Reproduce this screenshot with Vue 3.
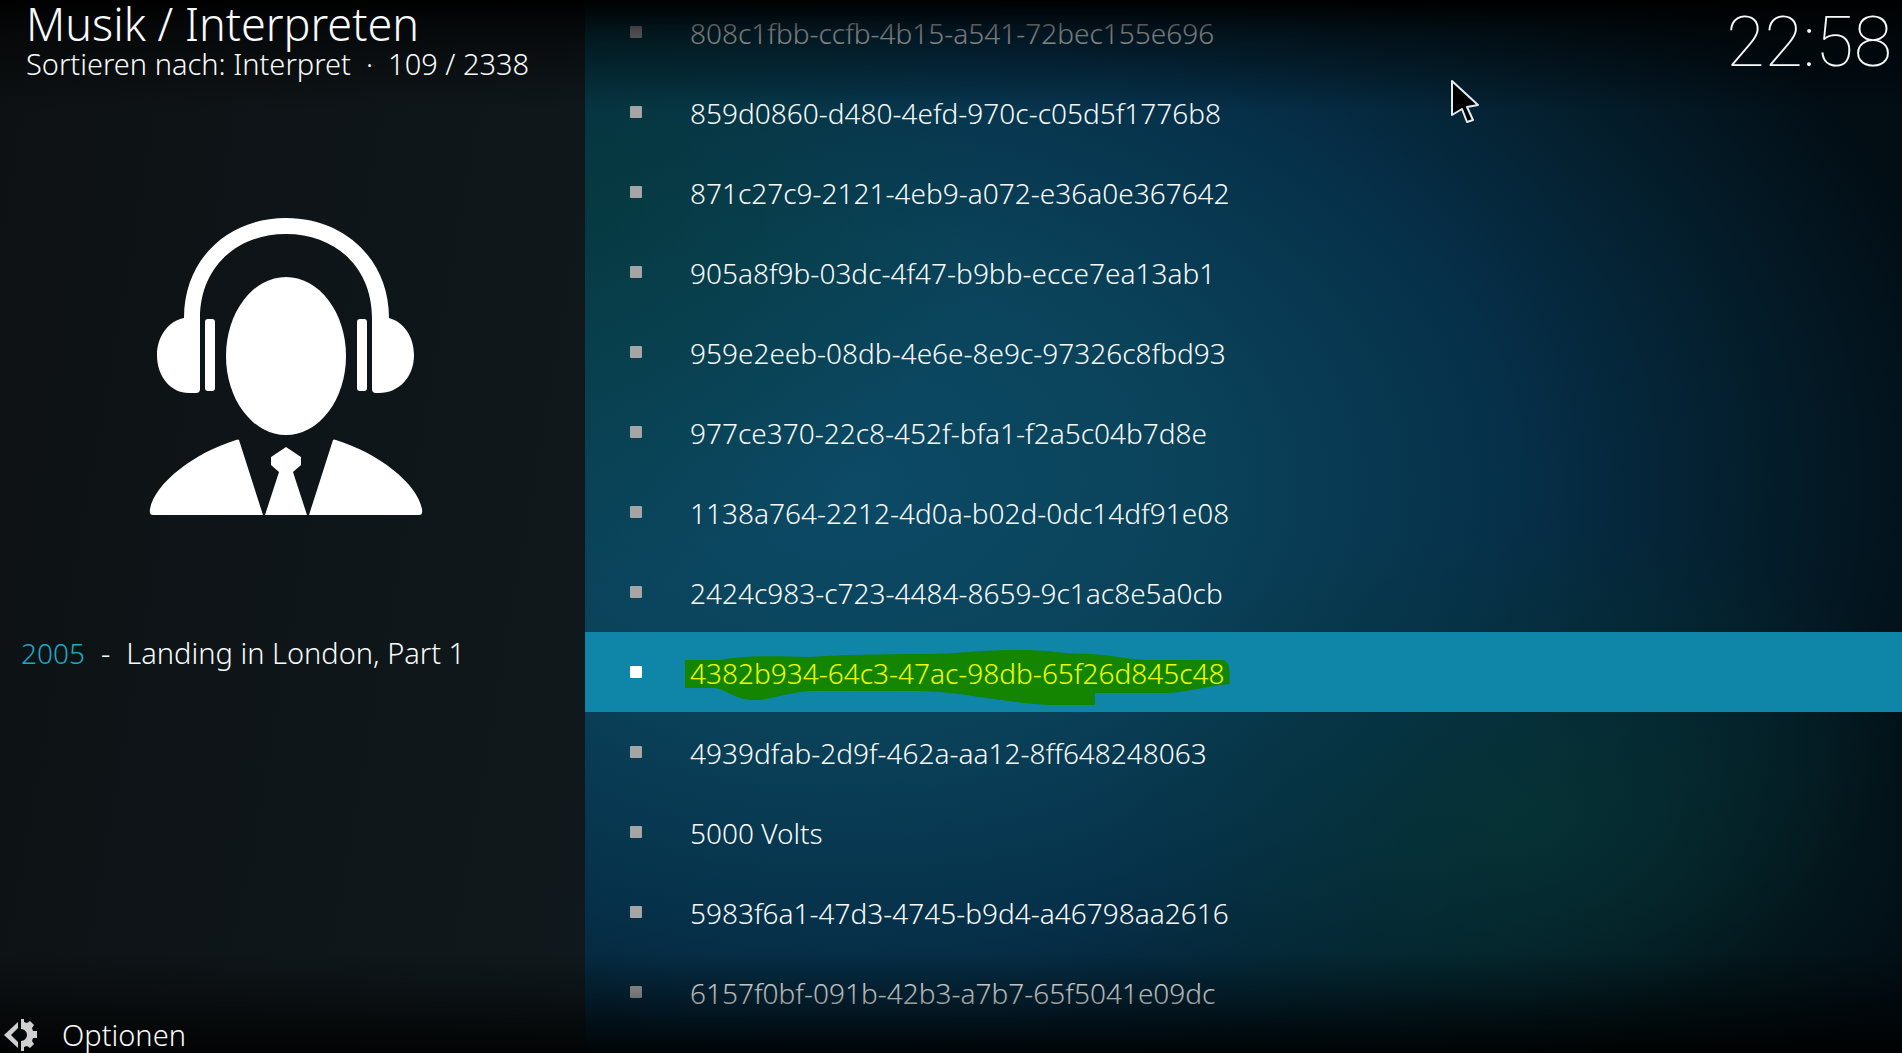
<template>
  <div class="screen">
    <aside class="panel">
      <header class="heading">
        <h1>Musik / Interpreten</h1>
        <p>Sortieren nach: Interpret &nbsp;·&nbsp; 109 / 2338</p>
      </header>

      <!-- artist placeholder -->
      <svg class="artist" viewBox="0 0 310 330" fill="#fff">
        <path d="M54 118C54 59 98 18 156 18S259 59 259 118C274 122 284 137 284 155C284 177 269 193 249 193H246Q242 193 242 189V118C242 68 206 34 156 34S70 68 70 118V189Q70 193 66 193H59C41 193 27 177 27 155C27 137 38 121 54 118Z" />
        <rect x="75" y="119" width="10" height="72" rx="3" />
        <rect x="227" y="119" width="10" height="72" rx="3" />
        <ellipse cx="156" cy="156" rx="60" ry="79" />
        <path d="M109 240L133 315H23Q19 315 20 309C25 283 64 253 106 240Q108 239 109 240Z" />
        <path d="M203 240L179 315H289Q293 315 292 309C287 283 248 253 206 240Q204 239 203 240Z" />
        <path d="M156 247L171 257V265L163 272L177 315H135L149 272L141 265V257Z" />
      </svg>

      <div class="discography">
        <span class="year">2005</span>
        <span>-</span>
        <span>Landing in London, Part 1</span>
      </div>
    </aside>

    <main class="content">
      <ul class="artists">
        <li
          v-for="(artist, index) in artists"
          :key="artist"
          :class="{ active: index === current }"
          @click="current = index"
        >
          <i class="bullet"></i>
          <span class="name">
            <svg v-if="artist === marked" class="marker" viewBox="0 0 546 56" preserveAspectRatio="none">
              <path d="M0 10H35C60 5 90 6 125 7C170 4 230 4 245 4C285 3 310 -1 345 0C370 1 382 4 405 4C430 5 445 10 465 10H540Q546 12 546 24V34C520 36 500 44 475 43H411V55H365C320 53 270 40 230 41H125C100 43 85 50 70 50C50 50 43 40 30 38H0Z" fill="#138500" />
            </svg>
            <span class="label" :class="{ marked: artist === marked }">{{ artist }}</span>
          </span>
        </li>
      </ul>
    </main>

    <div class="shade"></div>

    <button class="options" type="button">
      <svg class="gear" viewBox="0 0 34 34" fill="#d0d0d0">
        <path d="M14 4V10L7 17L14 24V30L0 17Z" />
        <path d="M17 1H20V4L23 5L26 3L30 7L28 10L29 13H33V20H29L28 23L30 26L26 30L23 28L20 29V33H17V23A6 6 0 0 0 17 11Z" />
      </svg>
      <span>Optionen</span>
    </button>

    <time class="clock">22:58</time>

    <svg class="cursor" viewBox="0 0 30 46">
      <path d="M2 2V36L12 30L17 43L23 41L17 28L28 26Z" fill="#000" stroke="#e4eef0" stroke-width="2" stroke-linejoin="round" />
    </svg>
  </div>
</template>

<script setup>
import { ref } from 'vue'

const artists = [
  '808c1fbb-ccfb-4b15-a541-72bec155e696',
  '859d0860-d480-4efd-970c-c05d5f1776b8',
  '871c27c9-2121-4eb9-a072-e36a0e367642',
  '905a8f9b-03dc-4f47-b9bb-ecce7ea13ab1',
  '959e2eeb-08db-4e6e-8e9c-97326c8fbd93',
  '977ce370-22c8-452f-bfa1-f2a5c04b7d8e',
  '1138a764-2212-4d0a-b02d-0dc14df91e08',
  '2424c983-c723-4484-8659-9c1ac8e5a0cb',
  '4382b934-64c3-47ac-98db-65f26d845c48',
  '4939dfab-2d9f-462a-aa12-8ff648248063',
  '5000 Volts',
  '5983f6a1-47d3-4745-b9d4-a46798aa2616',
  '6157f0bf-091b-42b3-a7b7-65f5041e09dc'
]

const current = ref(8)
const marked = '4382b934-64c3-47ac-98db-65f26d845c48'
</script>

<style>
body {
  margin: 0;
  background: #000;
}
</style>

<style scoped>
.screen {
  position: relative;
  display: flex;
  height: 100vh;
  overflow: hidden;
  color: #f8fbfb;
  font-family: "Noto Sans", sans-serif;
  font-size: 29px;
  font-weight: 300;
  line-height: 40px;
}
.panel {
  display: flex;
  flex-direction: column;
  flex: 0 0 585px;
  box-sizing: border-box;
  background: linear-gradient(100deg, #0d1113, #10191d);
}
.heading {
  position: relative;
  z-index: 2;
  padding: 0 26px;
}
h1,
p {
  margin: 0;
  font-weight: 300;
}
h1 {
  font-size: 45px;
  line-height: 48px;
}
p {
  line-height: 32px;
}
.artist {
  width: 310px;
  height: 330px;
  margin: 120px 0 0 130px;
}
.discography {
  display: flex;
  align-items: baseline;
  gap: 16px;
  margin-top: 103px;
  padding: 0 21px;
}
.year {
  color: #1fa8c4;
  font-size: 28px;
}
.content {
  flex: 1;
  min-width: 0;
  background:
    radial-gradient(ellipse 30% 38% at 0% 18%, rgba(4, 56, 52, 0.6), rgba(4, 56, 52, 0)),
    radial-gradient(ellipse 34% 28% at 72% 78%, rgba(6, 54, 52, 0.75), rgba(6, 54, 52, 0)),
    radial-gradient(ellipse 86% 74% at 20% 46%, #0c4a66 0%, #0a4259 32%, #06304a 58%, #041e2c 80%, #020d14 100%);
}
.artists {
  margin: -8px 0 0;
  padding: 0;
  list-style: none;
  font-size: 28px;
}
li {
  display: flex;
  align-items: center;
  height: 80px;
  padding-left: 45px;
  cursor: pointer;
}
li.active {
  background: #0f85a8;
}
.bullet {
  width: 12px;
  height: 12px;
  border-radius: 1px;
  background: #a5a5a5;
}
li.active .bullet {
  background: #fff;
}
.name {
  position: relative;
  margin-left: 48px;
  padding-top: 2px;
}
.marker {
  position: absolute;
  top: -1px;
  left: -5px;
  width: calc(100% + 10px);
  height: 56px;
}
.label {
  position: relative;
}
.marked {
  color: #f0ff00;
}
/* dark edges at the top and bottom of the screen */
.shade {
  position: absolute;
  inset: 0;
  background: linear-gradient(#000 0, rgba(0, 0, 0, 0.55) 32px, transparent 110px calc(100% - 100px), rgba(0, 0, 0, 0.28) calc(100% - 60px), rgba(0, 0, 0, 0.85) 100%);
  pointer-events: none;
}
.options {
  position: absolute;
  bottom: 0;
  left: 4px;
  display: flex;
  align-items: center;
  gap: 24px;
  padding: 0;
  border: 0;
  background: none;
  color: inherit;
  font: inherit;
  line-height: 36px;
  cursor: pointer;
}
.gear {
  width: 34px;
  height: 34px;
}
.clock {
  position: absolute;
  top: 0;
  right: 10px;
  font-family: Roboto, sans-serif;
  font-size: 70px;
  font-weight: 100;
  line-height: 84px;
}
.cursor {
  position: absolute;
  top: 79px;
  left: 1450px;
  width: 30px;
  height: 46px;
}
</style>
